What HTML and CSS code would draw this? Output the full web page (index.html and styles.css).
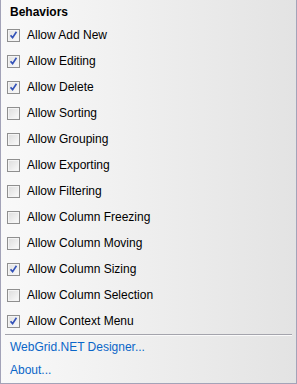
FILE: index.html
```html
<!DOCTYPE html>
<html lang="en">
<head>
    <meta charset="UTF-8">
    <title>Behaviors</title>
    <link rel="stylesheet" href="styles.css">
</head>
<body>
    <div class="panel">
        <h2 class="panel-title">Behaviors</h2>

        <ul class="options">
            <li class="option checked"><span class="box"></span>Allow Add New</li>
            <li class="option checked"><span class="box"></span>Allow Editing</li>
            <li class="option checked"><span class="box"></span>Allow Delete</li>
            <li class="option"><span class="box"></span>Allow Sorting</li>
            <li class="option"><span class="box"></span>Allow Grouping</li>
            <li class="option"><span class="box"></span>Allow Exporting</li>
            <li class="option"><span class="box"></span>Allow Filtering</li>
            <li class="option"><span class="box"></span>Allow Column Freezing</li>
            <li class="option"><span class="box"></span>Allow Column Moving</li>
            <li class="option checked"><span class="box"></span>Allow Column Sizing</li>
            <li class="option"><span class="box"></span>Allow Column Selection</li>
            <li class="option checked"><span class="box"></span>Allow Context Menu</li>
        </ul>

        <div class="separator"></div>

        <ul class="links">
            <li><a href="#">WebGrid.NET Designer...</a></li>
            <li><a href="#">About...</a></li>
        </ul>
    </div>
</body>
</html>
```

FILE: styles.css
```css
/* panel */
body {
    margin: 0;
    font-family: "Liberation Sans", Arial, sans-serif;
    font-size: 12px;
    color: #000;
}

.panel {
    width: 297px;
    height: 384px;
    box-sizing: border-box;
    border-left: 1px solid #a3a3b8;
    border-right: 1px solid #a3a3b8;
    border-bottom: 1px solid #a3a3b8;
    background: linear-gradient(to right, #f9f9f9, #e3e3e3);
}

.panel-title {
    margin: 0;
    padding: 4px 0 0 9px;
    font-size: 12px;
    font-weight: bold;
    line-height: 16px;
}

.options,
.links {
    list-style: none;
    margin: 0;
    padding: 0;
}

.options {
    margin-top: 2px;
}

.option {
    display: flex;
    align-items: center;
    height: 26px;
    padding-left: 6px;
}

.box {
    width: 11px;
    height: 11px;
    margin-right: 7px;
    border: 1px solid #8f8f8f;
    background: linear-gradient(135deg, #dcdcdc, #fbfbfb);
    box-shadow: inset 0 0 0 1px #f4f4f4;
    position: relative;
}

.checked .box {
    background: linear-gradient(135deg, #e2e2e2, #fafafa);
}

/* blue tick */
.checked .box::after {
    content: "";
    position: absolute;
    left: 2px;
    top: 1px;
    width: 7px;
    height: 8px;
    background: url("data:image/svg+xml,%3Csvg xmlns='http://www.w3.org/2000/svg' width='7' height='8' viewBox='0 0 7 8'%3E%3Cpath d='M0.5 4.2 L2.6 6.6 L6.5 0.8' fill='none' stroke='%233352b8' stroke-width='1.7'/%3E%3C/svg%3E") no-repeat;
}

.separator {
    height: 1px;
    margin: 0 4px;
    background: #a4a4ac;
    border-bottom: 1px solid #fafafa;
}

.links li {
    height: 23px;
    line-height: 23px;
    padding-left: 9px;
}

.links a {
    color: #0a66c8;
    text-decoration: none;
}
```
